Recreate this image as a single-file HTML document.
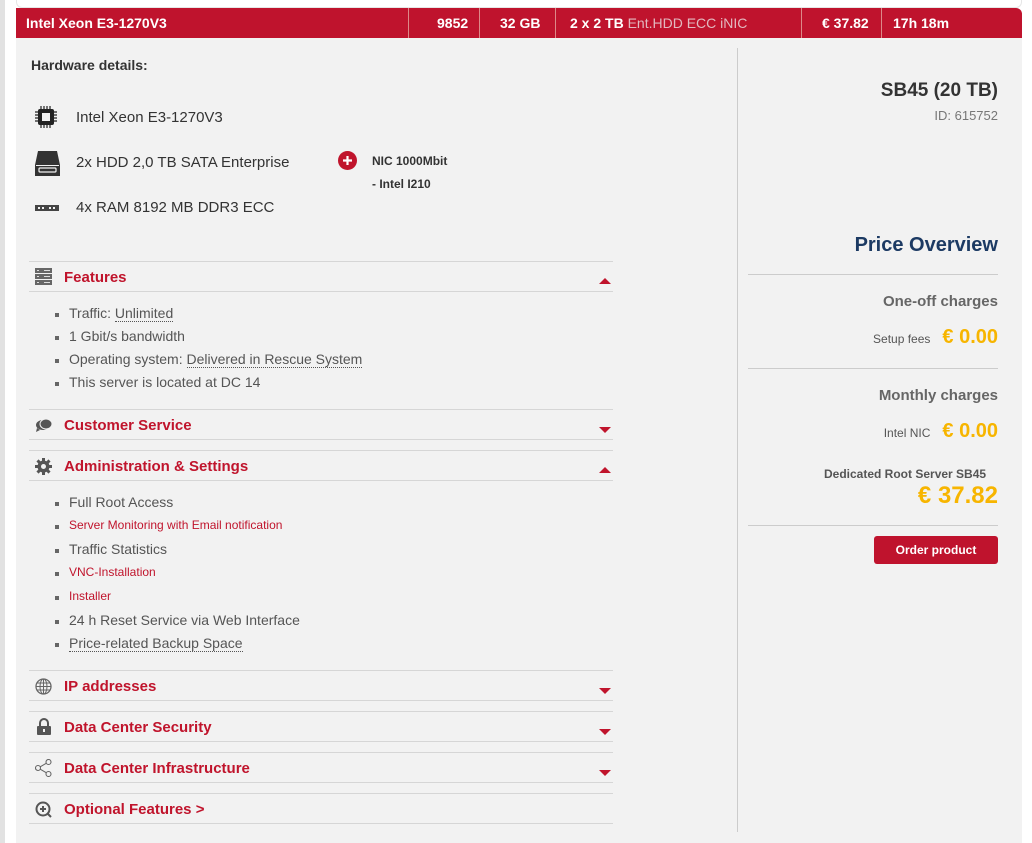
<!DOCTYPE html>
<html><head><meta charset="utf-8"><style>
*{margin:0;padding:0;box-sizing:border-box}
body{width:1032px;height:843px;background:#fff;font-family:"Liberation Sans",Arial,sans-serif;position:relative;overflow:hidden;color:#444}
.a{position:absolute;white-space:nowrap}
.hdr{position:absolute;left:16px;top:8px;width:1006px;height:30px;background:#bf132d;border-radius:0 6px 0 0}
.hdr .a{color:#fff;font-weight:bold;font-size:14px;top:7px}
.vd{position:absolute;top:0;width:1px;height:30px;background:#d88}
.panel{position:absolute;left:16px;top:38px;width:1006px;height:805px;background:#f2f2f2}
.hl{position:absolute;left:29px;width:584px;height:1px;background:#d6d6d6}
.tt{position:absolute;left:64px;color:#c0142c;font-weight:bold;font-size:15px}
.arr{position:absolute;left:599px;width:0;height:0;border-left:6px solid transparent;border-right:6px solid transparent}
.dn{border-top:6px solid #c0142c}
.up{border-bottom:6px solid #c0142c}
.li{position:absolute;left:69px;font-size:14px;color:#555}
.li.r{color:#c0142c;font-size:12px}
.li:before{content:"";position:absolute;left:-14px;top:8px;width:4px;height:4px;background:#666}
.li.r:before{top:7px}
.dot{border-bottom:1px dotted #555}
.ic{position:absolute;left:35px}
.rt{position:absolute;right:34px;text-align:right;white-space:nowrap}
.rl{position:absolute;left:748px;width:250px;height:1px;background:#ccc}
.y{color:#f7b500;font-weight:bold}
</style></head><body>
<div class="a" style="left:0;top:0;width:5px;height:843px;background:#e2e2e2"></div>
<div class="a" style="left:16px;top:0;width:1006px;height:8px;background:#fff;border:1px solid #e6e6e6;border-top:0;border-radius:0 0 6px 6px"></div>
<div class="hdr">
<div class="vd" style="left:392px"></div><div class="vd" style="left:463px"></div><div class="vd" style="left:539px"></div><div class="vd" style="left:785px"></div><div class="vd" style="left:865px"></div>
<div class="a" style="left:10px">Intel Xeon E3-1270V3</div>
<div class="a" style="left:421px">9852</div>
<div class="a" style="left:484px">32 GB</div>
<div class="a" style="left:554px">2 x 2 TB <span style="color:#e2b8bf;font-weight:normal;font-size:14px">Ent.HDD ECC iNIC</span></div>
<div class="a" style="left:806px">€ 37.82</div>
<div class="a" style="left:877px">17h 18m</div>
</div>
<div class="panel"></div>
<div class="a" style="left:737px;top:48px;width:1px;height:784px;background:#ccc"></div>

<div class="a" style="left:31px;top:57px;font-weight:bold;font-size:14px;color:#333">Hardware details:</div>
<svg class="ic" style="top:106px" width="22" height="22" viewBox="0 0 22 22"><rect x="3" y="3" width="16" height="16" rx="2" fill="#222"/><rect x="7" y="7" width="8" height="8" fill="#f2f2f2"/><g stroke="#222" stroke-width="1.2"><path d="M6 0v3M9 0v3M12 0v3M15 0v3M6 19v3M9 19v3M12 19v3M15 19v3M0 6h3M0 9h3M0 12h3M0 15h3M19 6h3M19 9h3M19 12h3M19 15h3"/></g></svg>
<div class="a" style="left:76px;top:109px;font-size:15px;color:#333">Intel Xeon E3-1270V3</div>
<svg class="ic" style="top:150px" width="25" height="26" viewBox="0 0 25 26"><path d="M3 1h19l3 14v11H0V15z" fill="#333"/><rect x="1" y="15" width="23" height="1" fill="#f2f2f2"/><rect x="4" y="18" width="17" height="4" rx="1" fill="none" stroke="#f2f2f2" stroke-width="1.2"/></svg>
<div class="a" style="left:76px;top:154px;font-size:15px;color:#333">2x HDD 2,0 TB SATA Enterprise</div>
<svg class="ic" style="top:204px" width="24" height="8"><rect x="0" y="1" width="24" height="6" fill="#444"/><g fill="#f2f2f2"><rect x="3" y="3" width="2" height="2"/><rect x="7" y="3" width="2" height="2"/><rect x="14" y="3" width="2" height="2"/><rect x="18" y="3" width="2" height="2"/></g></svg>
<div class="a" style="left:76px;top:199px;font-size:15px;color:#333">4x RAM 8192 MB DDR3 ECC</div>
<svg class="a" style="left:338px;top:151px" width="19" height="19"><circle cx="9.5" cy="9.5" r="9.5" fill="#c0142c"/><path d="M9.5 5v9M5 9.5h9" stroke="#fff" stroke-width="2.2"/></svg>
<div class="a" style="left:372px;top:154px;font-size:12px;font-weight:bold;color:#333">NIC 1000Mbit</div>
<div class="a" style="left:372px;top:177px;font-size:12px;font-weight:bold;color:#333">- Intel I210</div>

<div class="hl" style="top:261px"></div><div class="hl" style="top:291px"></div>
<svg class="ic" style="top:268px;left:35px" width="17" height="17"><rect x="0" y="0" width="17" height="5" fill="#666"/><rect x="0" y="6" width="17" height="5" fill="#666"/><rect x="0" y="12" width="17" height="5" fill="#666"/><g fill="#ddd"><rect x="2" y="2" width="2" height="1"/><rect x="2" y="8" width="2" height="1"/><rect x="2" y="14" width="2" height="1"/><rect x="9" y="2" width="6" height="1"/><rect x="9" y="8" width="6" height="1"/><rect x="9" y="14" width="6" height="1"/></g></svg>
<div class="tt" style="top:269px">Features</div><div class="arr up" style="top:278px"></div>
<div class="li" style="top:305px">Traffic: <span class="dot">Unlimited</span></div>
<div class="li" style="top:328px">1 Gbit/s bandwidth</div>
<div class="li" style="top:351px">Operating system: <span class="dot">Delivered in Rescue System</span></div>
<div class="li" style="top:374px">This server is located at DC 14</div>

<div class="hl" style="top:409px"></div><div class="hl" style="top:439px"></div>
<svg class="ic" style="top:418px" width="18" height="14"><ellipse cx="8" cy="7" rx="7" ry="5" fill="#555"/><ellipse cx="11" cy="6" rx="6" ry="5" fill="#555" stroke="#f2f2f2" stroke-width="1"/><path d="M2 10l-1 4 4-2z" fill="#555"/></svg>
<div class="tt" style="top:417px">Customer Service</div><div class="arr dn" style="top:427px"></div>

<div class="hl" style="top:450px"></div><div class="hl" style="top:480px"></div>
<svg class="ic" style="top:458px" width="17" height="17" viewBox="0 0 17 17"><g fill="#555"><circle cx="8.5" cy="8.5" r="6"/><rect x="7" y="0" width="3" height="17"/><rect x="0" y="7" width="17" height="3"/><rect x="7" y="0" width="3" height="17" transform="rotate(45 8.5 8.5)"/><rect x="7" y="0" width="3" height="17" transform="rotate(-45 8.5 8.5)"/></g><circle cx="8.5" cy="8.5" r="2.5" fill="#f2f2f2"/></svg>
<div class="tt" style="top:458px">Administration &amp; Settings</div><div class="arr up" style="top:467px"></div>
<div class="li" style="top:494px">Full Root Access</div>
<div class="li r" style="top:518px">Server Monitoring with Email notification</div>
<div class="li" style="top:541px">Traffic Statistics</div>
<div class="li r" style="top:565px">VNC-Installation</div>
<div class="li r" style="top:589px">Installer</div>
<div class="li" style="top:612px">24 h Reset Service via Web Interface</div>
<div class="li" style="top:635px"><span class="dot">Price-related Backup Space</span></div>

<div class="hl" style="top:670px"></div><div class="hl" style="top:700px"></div>
<svg class="ic" style="top:678px" width="17" height="17"><circle cx="8.5" cy="8.5" r="7.5" fill="none" stroke="#666" stroke-width="1.3"/><ellipse cx="8.5" cy="8.5" rx="3.5" ry="7.5" fill="none" stroke="#666"/><path d="M1 8.5h15M2 5h13M2 12h13M8.5 1v15" stroke="#666"/></svg>
<div class="tt" style="top:678px">IP addresses</div><div class="arr dn" style="top:688px"></div>

<div class="hl" style="top:711px"></div><div class="hl" style="top:741px"></div>
<svg class="ic" style="top:718px;left:37px" width="14" height="17"><path d="M3 8V5a4 4 0 0 1 8 0v3" fill="none" stroke="#555" stroke-width="2"/><rect x="0" y="8" width="14" height="9" rx="1" fill="#555"/><rect x="6" y="11" width="2" height="3" fill="#f2f2f2"/></svg>
<div class="tt" style="top:719px">Data Center Security</div><div class="arr dn" style="top:729px"></div>

<div class="hl" style="top:752px"></div><div class="hl" style="top:782px"></div>
<svg class="ic" style="top:759px" width="17" height="18"><g fill="none" stroke="#666" stroke-width="1.1"><circle cx="3" cy="9" r="2.5"/><circle cx="13.5" cy="3" r="2.5"/><circle cx="13.5" cy="15" r="2.5"/><path d="M5.2 7.8l6-3.5M5.2 10.2l6 3.5"/></g></svg>
<div class="tt" style="top:760px">Data Center Infrastructure</div><div class="arr dn" style="top:770px"></div>

<div class="hl" style="top:793px"></div><div class="hl" style="top:823px"></div>
<svg class="ic" style="top:801px" width="17" height="17"><circle cx="8" cy="8" r="6.5" fill="none" stroke="#555" stroke-width="2"/><path d="M8 5v6M5 8h6M13 13l3 3" stroke="#555" stroke-width="2"/></svg>
<div class="tt" style="top:801px">Optional Features &gt;</div>

<div class="rt" style="top:80px;font-size:19px;font-weight:bold;color:#333">SB45 (20 TB)</div>
<div class="rt" style="top:108px;font-size:13px;color:#777">ID: 615752</div>
<div class="rt" style="top:234px;font-size:20px;font-weight:bold;color:#1c3a63">Price Overview</div>
<div class="rl" style="top:274px"></div>
<div class="rt" style="top:293px;font-size:15px;font-weight:bold;color:#666">One-off charges</div>
<div class="rt" style="top:326px"><span style="font-size:12px;color:#555;margin-right:12px">Setup fees</span><span class="y" style="font-size:20px">€ 0.00</span></div>
<div class="rl" style="top:368px"></div>
<div class="rt" style="top:387px;font-size:15px;font-weight:bold;color:#666">Monthly charges</div>
<div class="rt" style="top:420px"><span style="font-size:12px;color:#555;margin-right:12px">Intel NIC</span><span class="y" style="font-size:20px">€ 0.00</span></div>
<div class="a" style="left:824px;top:467px;font-size:12px;font-weight:bold;color:#555">Dedicated Root Server SB45</div>
<div class="rt y" style="top:482px;font-size:24px">€ 37.82</div>
<div class="rl" style="top:525px"></div>
<div class="a" style="left:874px;top:536px;width:124px;height:28px;background:#bf132d;border-radius:3px;color:#fff;font-size:12px;font-weight:bold;text-align:center;line-height:28px">Order product</div>
</body></html>
